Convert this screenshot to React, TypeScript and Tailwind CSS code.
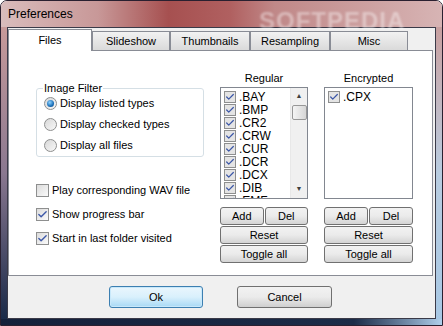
import { Check } from 'lucide-react';

const font = { fontFamily: '"Liberation Sans", Arial, sans-serif' };

const tabs = ['Slideshow', 'Thumbnails', 'Resampling', 'Misc'];
const tabWidths = ['w-[78px]', 'w-[80px]', 'w-[80px]', 'w-[78px]'];

const regular = ['.BAY', '.BMP', '.CR2', '.CRW', '.CUR', '.DCR', '.DCX', '.DIB', '.EMF'];

const Radio = ({ on, label }: { on?: boolean; label: string }) => (
  <div className="flex items-center h-[21px]">
    <div className="w-[13px] h-[13px] rounded-full border border-[#8e8f8f] bg-gradient-to-br from-[#d8d8d8] to-[#f8f8f8] flex items-center justify-center">
      {on && (
        <div className="w-[7px] h-[7px] rounded-full bg-[radial-gradient(circle_at_40%_35%,#8fd3ff,#1b6fb8_60%,#0d3f73)]" />
      )}
    </div>
    <span className="ml-[3px] text-[11px] text-black">{label}</span>
  </div>
);

const Box = ({ on, small }: { on?: boolean; small?: boolean }) => (
  <div
    className={`${small ? 'w-[12px] h-[12px] bg-[#e4e4e4]' : 'w-[13px] h-[13px] bg-gradient-to-br from-[#dcdcdc] to-[#fafafa]'} border border-[#8e8f8f] flex items-center justify-center shrink-0`}
  >
    {on && <Check size={small ? 10 : 11} strokeWidth={3} className="text-[#3d58a8]" />}
  </div>
);

const CheckRow = ({ on, label }: { on?: boolean; label: string }) => (
  <div className="flex items-center h-[24px]">
    <Box on={on} />
    <span className="ml-[3px] text-[11px] text-black">{label}</span>
  </div>
);

const Btn = ({ label, className }: { label: string; className?: string }) => (
  <button
    className={`h-[18px] rounded-[3px] border border-[#707070] bg-gradient-to-b from-[#f2f2f2] via-[#ebebeb] to-[#d4d4d4] text-[11px] text-black leading-none ${className || ''}`}
  >
    {label}
  </button>
);

const ListColumn = ({ title, items, scroll }: { title: string; items: string[]; scroll?: boolean }) => (
  <div className="flex flex-col">
    <div className="h-[16px] text-center text-[11px] text-black leading-[14px]">{title}</div>
    <div className="h-[112px] border border-[#828790] bg-white flex overflow-hidden">
      <div className="flex-1 pt-[2px] pl-[3px]">
        {items.map((it) => (
          <div key={it} className="flex items-center h-[13px]">
            <Box on small />
            <span className="ml-[3px] text-[12px] text-black leading-none">{it}</span>
          </div>
        ))}
      </div>
      {scroll && (
        <div className="w-[17px] bg-[#f0f0f0] flex flex-col items-center border-l border-[#e8e8e8]">
          <div className="h-[17px] flex items-center justify-center text-[7px] text-[#404040]">▲</div>
          <div className="w-[15px] h-[15px] rounded-[2px] border border-[#979797] bg-gradient-to-r from-[#f4f4f4] to-[#d6d6d6]" />
          <div className="flex-1" />
          <div className="h-[17px] flex items-center justify-center text-[7px] text-[#404040]">▼</div>
        </div>
      )}
    </div>
    <div className="mt-[8px] flex flex-col gap-[1px]">
      <div className="flex gap-[1px]">
        <Btn label="Add" className="flex-1" />
        <Btn label="Del" className="flex-1" />
      </div>
      <Btn label="Reset" />
      <Btn label="Toggle all" />
    </div>
  </div>
);

export default function App() {
  return (
    <div style={font} className="w-[443px] h-[326px] flex flex-col overflow-hidden rounded-t-[7px] border border-[#2a2030]">
      {/* title bar */}
      <div className="h-[26px] flex items-center pl-[7px] bg-[linear-gradient(90deg,#d9bcbc_0%,#c89898_22%,#a65050_38%,#b06060_52%,#c08888_62%,#d7b4b4_100%)] relative">
        <span className="text-[12px] text-black">Preferences</span>
        <span className="absolute left-[258px] top-[2px] text-[24px] font-bold tracking-[1px] text-white/40 blur-[1px]">SOFTPEDIA</span>
      </div>
      <div className="flex flex-1">
        <div className="w-[6px] bg-gradient-to-b from-[#c89a9a] via-[#8a7890] to-[#1a2a48]" />
        {/* client */}
        <div className="flex-1 border border-[#3a3a48] bg-[#f0f0f0] flex flex-col">
          <div className="flex items-end h-[22px]">
            <div className="w-[84px] h-[22px] bg-white border border-b-0 border-[#898c95] flex items-center justify-center text-[11px] text-black relative z-10 -mb-[1px]">
              Files
            </div>
            {tabs.map((t, i) => (
              <div
                key={t}
                className={`${tabWidths[i]} h-[19px] bg-gradient-to-b from-[#f2f2f2] to-[#dadada] border border-b-0 border-[#898c95] flex items-center justify-center text-[11px] text-black`}
              >
                {t}
              </div>
            ))}
          </div>
          <div className="w-[425px] h-[226px] bg-white border border-[#898c95] flex pl-[27px] pt-[20px]">
            <div className="w-[168px] flex flex-col">
              <fieldset className="mt-[11px] h-[75px] border border-[#d5dfe5] rounded-[3px] pl-[7px] pt-0">
                <legend className="text-[11px] text-black px-[1px] -ml-[1px] leading-[12px]">Image Filter</legend>
                <div className="-mt-[1px]">
                  <Radio on label="Display listed types" />
                  <Radio label="Display checked types" />
                  <Radio label="Display all files" />
                </div>
              </fieldset>
              <div className="mt-[21px]">
                <CheckRow label="Play corresponding WAV file" />
                <CheckRow on label="Show progress bar" />
                <CheckRow on label="Start in last folder visited" />
              </div>
            </div>
            <div className="w-[88px] ml-[16px]">
              <ListColumn title="Regular" items={regular} scroll />
            </div>
            <div className="w-[89px] ml-[16px]">
              <ListColumn title="Encrypted" items={['.CPX']} />
            </div>
          </div>
          <div className="flex-1 flex items-center justify-center gap-[34px] pr-[2px]">
            <button className="w-[94px] h-[22px] rounded-[3px] border border-[#3c7fb1] bg-gradient-to-b from-[#eaf6fd] via-[#d9f0fc] to-[#a7d9f5] text-[11px] text-black shadow-[inset_0_0_0_1px_#c8e8fa]">
              Ok
            </button>
            <button className="w-[95px] h-[22px] rounded-[3px] border border-[#707070] bg-gradient-to-b from-[#f2f2f2] via-[#ebebeb] to-[#cfcfcf] text-[11px] text-black">
              Cancel
            </button>
          </div>
        </div>
        <div className="w-[6px] bg-gradient-to-b from-[#c8a0a0] via-[#b8cce0] to-[#a8c8e4]" />
      </div>
      <div className="h-[6px] bg-gradient-to-r from-[#14203a] via-[#1c2c48] via-80% to-[#b0d0ec]" />
    </div>
  );
}
